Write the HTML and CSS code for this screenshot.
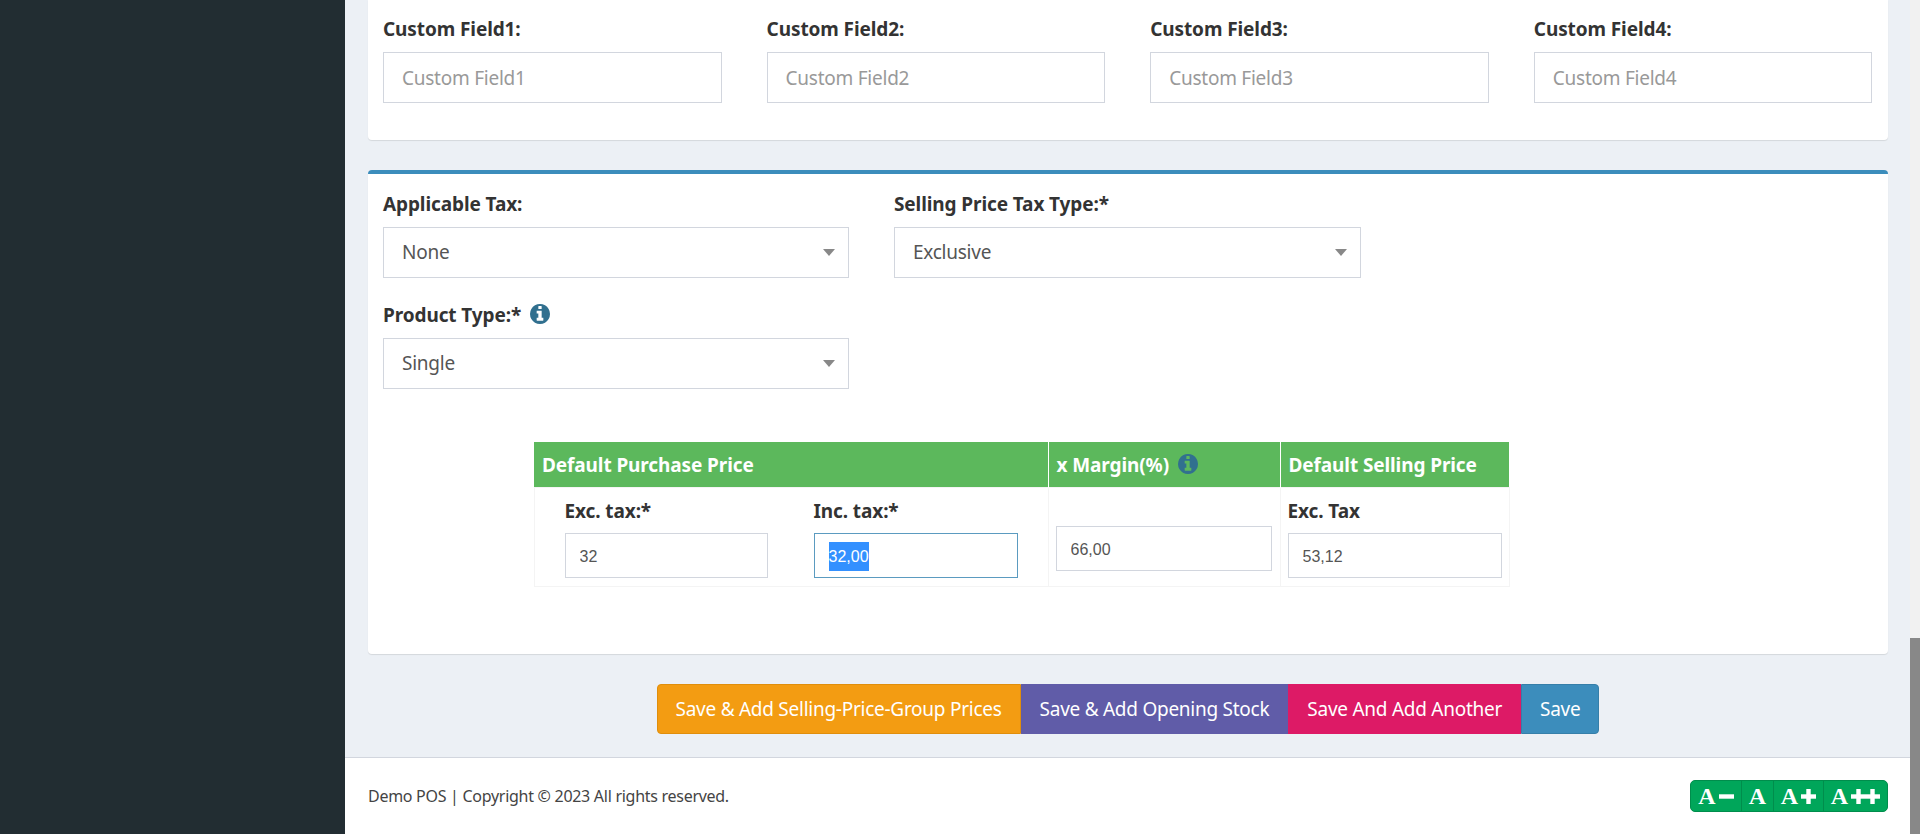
FILE: index.html
```html
<!DOCTYPE html>
<html lang="en">
<head>
<meta charset="utf-8">
<title>Add product</title>
<link rel="stylesheet" href="styles.css">
</head>
<body>
<aside class="sidebar"></aside>
<div class="main">
  <main class="content">
    <section class="card card-fields">
      <div class="grid-four">
        <div class="field"><label class="label">Custom Field1:</label><input class="control" placeholder="Custom Field1"></div>
        <div class="field"><label class="label">Custom Field2:</label><input class="control" placeholder="Custom Field2"></div>
        <div class="field"><label class="label">Custom Field3:</label><input class="control" placeholder="Custom Field3"></div>
        <div class="field"><label class="label">Custom Field4:</label><input class="control" placeholder="Custom Field4"></div>
      </div>
    </section>
    <section class="card card-price">
      <div class="grid-three">
        <div class="field"><label class="label">Applicable Tax:</label><div class="select-wrap"><select class="control"><option>None</option></select></div></div>
        <div class="field"><label class="label">Selling Price Tax Type:*</label><div class="select-wrap"><select class="control"><option>Exclusive</option></select></div></div>
      </div>
      <div class="grid-three row-gap">
        <div class="field">
          <label class="label label-icon">Product Type:*
            <svg class="info" viewBox="128 128 1536 1536"><path d="M1152 1376v-160q0-14-9-23t-23-9h-96v-512q0-14-9-23t-23-9h-320q-14 0-23 9t-9 23v160q0 14 9 23t23 9h96v320h-96q-14 0-23 9t-9 23v160q0 14 9 23t23 9h448q14 0 23-9t9-23zm-128-896v-160q0-14-9-23t-23-9h-192q-14 0-23 9t-9 23v160q0 14 9 23t23 9h192q14 0 23-9t9-23zm640 416q0 209-103 385.5t-279.5 279.5-385.5 103-385.5-103-279.5-279.5-103-385.5 103-385.5 279.5-279.5 385.5-103 385.5 103 279.5 279.5 103 385.5z"/></svg>
          </label>
          <div class="select-wrap"><select class="control"><option>Single</option></select></div>
        </div>
      </div>
      <table class="price-table">
        <colgroup><col class="col-purchase"><col class="col-margin"><col class="col-selling"></colgroup>
        <thead>
          <tr>
            <th>Default Purchase Price</th>
            <th>x Margin(%)
              <svg class="info info-head" viewBox="128 128 1536 1536"><path d="M1152 1376v-160q0-14-9-23t-23-9h-96v-512q0-14-9-23t-23-9h-320q-14 0-23 9t-9 23v160q0 14 9 23t23 9h96v320h-96q-14 0-23 9t-9 23v160q0 14 9 23t23 9h448q14 0 23-9t9-23zm-128-896v-160q0-14-9-23t-23-9h-192q-14 0-23 9t-9 23v160q0 14 9 23t23 9h192q14 0 23-9t9-23zm640 416q0 209-103 385.5t-279.5 279.5-385.5 103-385.5-103-279.5-279.5-103-385.5 103-385.5 279.5-279.5 385.5-103 385.5 103 279.5 279.5 103 385.5z"/></svg>
            </th>
            <th>Default Selling Price</th>
          </tr>
        </thead>
        <tbody>
          <tr>
            <td class="cell-purchase">
              <div class="purchase-pair">
                <div class="sub-field"><label class="label">Exc. tax:*</label><input class="control small" value="32"></div>
                <div class="sub-field"><label class="label">Inc. tax:*</label><div class="control small focused"><span class="selected">32,00</span></div></div>
              </div>
            </td>
            <td class="cell-margin"><input class="control small" value="66,00"></td>
            <td class="cell-selling"><label class="label">Exc. Tax</label><input class="control small" value="53,12"></td>
          </tr>
        </tbody>
      </table>
    </section>
    <div class="actions">
      <button class="btn btn-orange">Save &amp; Add Selling-Price-Group Prices</button>
      <button class="btn btn-purple">Save &amp; Add Opening Stock</button>
      <button class="btn btn-pink">Save And Add Another</button>
      <button class="btn btn-blue">Save</button>
    </div>
  </main>
  <footer class="footer">
    <span class="copy">Demo POS | Copyright © 2023 All rights reserved.</span>
    <div class="zoom-group">
      <button class="zoom zoom-minus">A<svg class="sign sign-one" viewBox="0 0 15 15"><rect y="5.3" width="15" height="4.4"/></svg></button>
      <button class="zoom zoom-plain">A</button>
      <button class="zoom zoom-plus">A<svg class="sign sign-one" viewBox="0 0 15 15"><rect y="5.3" width="15" height="4.4"/><rect x="5.3" width="4.4" height="15"/></svg></button>
      <button class="zoom zoom-plus2">A<svg class="sign sign-two" viewBox="0 0 29 15"><rect y="5.3" width="29" height="4.4"/><rect x="5.3" width="4.4" height="15"/><rect x="19.3" width="4.4" height="15"/></svg></button>
    </div>
  </footer>
</div>
<div class="scrollbar"><div class="thumb"></div></div>
</body>
</html>
```
FILE: styles.css
```css
* { box-sizing: border-box; }
html, body { height: 100%; }
body {
  margin: 0;
  display: flex;
  height: 834px;
  overflow: hidden;
  background: #ecf0f5;
  font-family: "Noto Sans", "Liberation Sans", sans-serif;
  font-size: 18px;
  color: #333;
}
.sidebar { width: 345px; flex: none; background: #222d32; }
.main { flex: 1; display: flex; flex-direction: column; min-width: 0; }
.content { flex: 1; padding: 0 22px 0 23px; }
.scrollbar { width: 10px; flex: none; background: #f1f1f1; display: flex; flex-direction: column; justify-content: flex-end; }
.thumb { height: 196px; background: #888; }

.card { background: #fff; border-radius: 0 0 4px 4px; box-shadow: 0 1px 1px rgba(0,0,0,.1); padding-left: 15px; }
.card-fields { height: 140px; padding-top: 18px; }
.card-price { height: 484px; margin-top: 30px; border-top: 4px solid #3c8dbc; border-radius: 4px; padding-top: 19px; }

.grid-four { display: grid; grid-template-columns: repeat(4, 338.6px); column-gap: 45px; }
.grid-three { display: grid; grid-template-columns: 466px 467px; column-gap: 45px; }
.row-gap { margin-top: 26px; }

.label { display: block; height: 22px; line-height: 22px; margin-bottom: 12px; font-weight: 700; font-size: 19px; letter-spacing: -0.1px; white-space: nowrap; color: #333; }
.label-icon { display: flex; align-items: center; }
.control {
  display: block;
  width: 100%;
  height: 51px;
  padding: 0 18px;
  border: 1px solid #d2d6de;
  border-radius: 0;
  background: #fff;
  font-family: inherit;
  font-size: 19px;
  letter-spacing: -0.25px;
  color: #555;
  outline: none;
  appearance: none;
}
select.control { padding-bottom: 2px; }
.control::placeholder { color: #999; opacity: 1; }
.select-wrap { position: relative; }
.select-wrap::after {
  content: "";
  position: absolute;
  right: 14px;
  top: 22px;
  border-top: 7px solid #888;
  border-left: 6px solid transparent;
  border-right: 6px solid transparent;
}

.info { width: 20px; height: 20px; margin: -3px 0 0 9px; flex: none; fill: #31708f; }
.info-head { margin: 0 0 0 4px; vertical-align: -2px; }

.price-table { margin: 53px 0 0 150.5px; width: 975px; table-layout: fixed; border-collapse: collapse; }
.col-purchase { width: 514px; }
.col-margin { width: 232px; }
.col-selling { width: 229px; }
.price-table th {
  height: 45px;
  padding: 1px 8px 0;
  background: #5cb85c;
  color: #fff;
  font-size: 19px;
  font-weight: 700;
  letter-spacing: -0.1px;
  text-align: left;
  border-left: 1px solid #fff;
  white-space: nowrap;
}
.price-table th:first-child { border-left: 0; }
.price-table td { height: 99px; padding: 0; border: 1px solid #f4f4f4; vertical-align: top; }
.price-table .label { margin-bottom: 11px; }
.cell-purchase { padding: 12px 0 0 30px !important; }
.purchase-pair { display: grid; grid-template-columns: 203px 204px; column-gap: 46px; }
.cell-margin { padding: 38px 8px 0 7px !important; }
.cell-selling { padding: 12px 7px 0 7px !important; }
.small { height: 45px; padding: 3px 14px 0; font-family: "Liberation Sans", sans-serif; font-size: 16px; letter-spacing: 0; }
.focused { border-color: #5b9bc0; line-height: 40px; color: #555; }
.selected { background: #3390ff; color: #fff; display: inline-block; line-height: 29px; }

.actions { display: flex; justify-content: center; margin-top: 30px; }
.btn { height: 50px; padding: 0 18px; border: 1px solid transparent; font-family: inherit; font-size: 19px; letter-spacing: -0.26px; color: #fff; white-space: nowrap; }
.btn:first-child { border-radius: 4px 0 0 4px; }
.btn:last-child { border-radius: 0 4px 4px 0; }
.btn-orange { background: #f39c12; border-color: #e08e0b; }
.btn-purple { background: #605ca8; border-color: #605ca8; }
.btn-pink { background: #dd1a66; border-color: #dd1a66; }
.btn-blue { background: #3c8dbc; border-color: #367fa9; }

.footer { height: 77px; flex: none; display: flex; align-items: center; justify-content: space-between; padding: 0 22px 0 23px; background: #fff; border-top: 1px solid #d2d6de; }
.copy { font-size: 16px; letter-spacing: -0.28px; color: #444; }
.zoom-group { display: flex; height: 32px; border: 1px solid #008d4c; border-radius: 5px; overflow: hidden; background: #00a65a; }
.zoom { display: flex; align-items: center; justify-content: center; gap: 3px; padding: 0; height: 100%; border: 0; border-left: 1px solid #008d4c; background: transparent; color: #fff; font-family: "Liberation Serif", serif; font-weight: 700; font-size: 24px; line-height: 1; }
.zoom:first-child { border-left: 0; }
.zoom-minus { width: 50px; }
.zoom-plain { width: 32px; }
.zoom-plus { width: 50px; }
.zoom-plus2 { width: 64px; }
.sign { height: 15px; fill: #fff; }
.sign-one { width: 15px; }
.sign-two { width: 29px; }
```
